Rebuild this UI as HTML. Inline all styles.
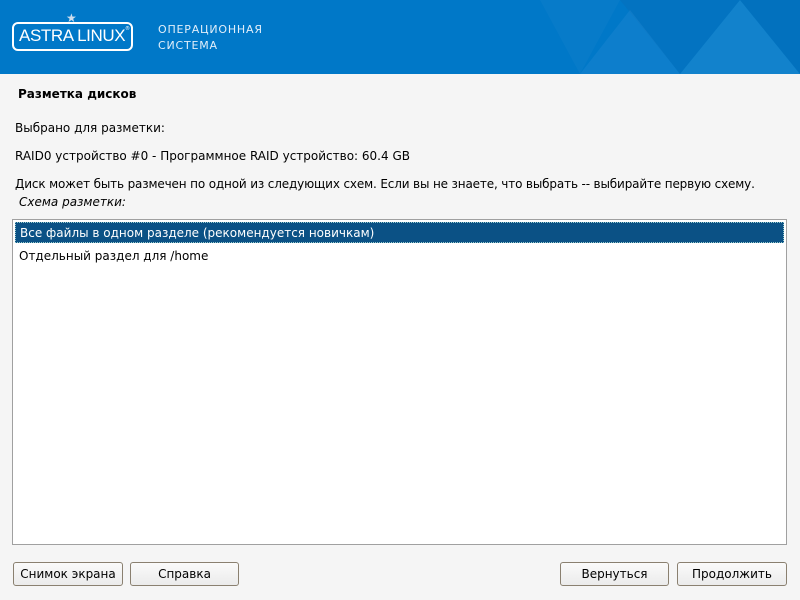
<!DOCTYPE html>
<html><head><meta charset="utf-8"><style>
body{margin:0;width:800px;height:600px;background:#f5f5f5;font-family:"DejaVu Sans","Liberation Sans",sans-serif;font-size:12px;color:#000;position:relative;overflow:hidden}
.hdr{position:absolute;left:0;top:0;width:800px;height:74px;background:#0078c8;overflow:hidden}
.t{position:absolute;white-space:nowrap}
.list{position:absolute;left:12px;top:219px;width:773px;height:324px;background:#fff;border:1px solid #a0a0a0}
.sel{position:absolute;left:2px;top:2px;width:769px;height:21px;background:#0b5185;border:1px dotted #9cc;box-sizing:border-box;color:#fff}
.btn{position:absolute;top:562px;height:24px;border:1px solid #8a8070;border-radius:3px;background:linear-gradient(#fafafa,#ebebeb);box-sizing:border-box;text-align:center;line-height:22px;font-size:12px}
</style></head><body>
<div class="hdr">
<svg width="800" height="74" style="position:absolute;left:0;top:0">
<polygon points="540,0 620,0 580,74" fill="#1482cc" opacity=".35"/>
<polygon points="620,0 740,0 680,74" fill="#0a6ab5" opacity=".35"/>
<polygon points="580,74 680,74 630,10" fill="#2a8fd6" opacity=".3"/>
<polygon points="680,74 800,74 740,0" fill="#3a9ad8" opacity=".3"/>
<polygon points="740,0 800,0 800,74" fill="#0862a8" opacity=".3"/>
</svg>
<div style="position:absolute;left:12px;top:22px;width:121px;height:29px;border:2px solid #fff;border-radius:6px;box-sizing:border-box"></div>
<div class="t" style="left:19px;top:26px;color:#fff;font-family:'Liberation Sans',sans-serif;font-size:17px;letter-spacing:-.4px">ASTRA LINUX</div>
<div class="t" style="left:125px;top:26px;color:#fff;font-size:5px">®</div>
<div class="t" style="left:66px;top:11px;color:#cde;font-size:12px">★</div>
<div class="t" style="left:158px;top:23px;color:#e0eefa;font-size:11px;letter-spacing:.8px">ОПЕРАЦИОННАЯ</div>
<div class="t" style="left:158px;top:39px;color:#e0eefa;font-size:11px;letter-spacing:.8px">СИСТЕМА</div>
</div>
<div class="t" style="left:18px;top:87px;font-weight:bold">Разметка дисков</div>
<div class="t" style="left:15px;top:121px">Выбрано для разметки:</div>
<div class="t" style="left:15px;top:149px">RAID0 устройство #0 - Программное RAID устройство: 60.4 GB</div>
<div class="t" style="left:15px;top:177px;letter-spacing:-.15px">Диск может быть размечен по одной из следующих схем. Если вы не знаете, что выбрать -- выбирайте первую схему.</div>
<div class="t" style="left:19px;top:195px;font-style:italic">Схема разметки:</div>
<div class="list">
<div class="sel"><span class="t" style="left:4px;top:3px">Все файлы в одном разделе (рекомендуется новичкам)</span></div>
<div class="t" style="left:6px;top:29px">Отдельный раздел для /home</div>
</div>
<div class="btn" style="left:13px;width:110px">Снимок экрана</div>
<div class="btn" style="left:130px;width:109px">Справка</div>
<div class="btn" style="left:560px;width:109px">Вернуться</div>
<div class="btn" style="left:677px;width:110px">Продолжить</div>
</body></html>
